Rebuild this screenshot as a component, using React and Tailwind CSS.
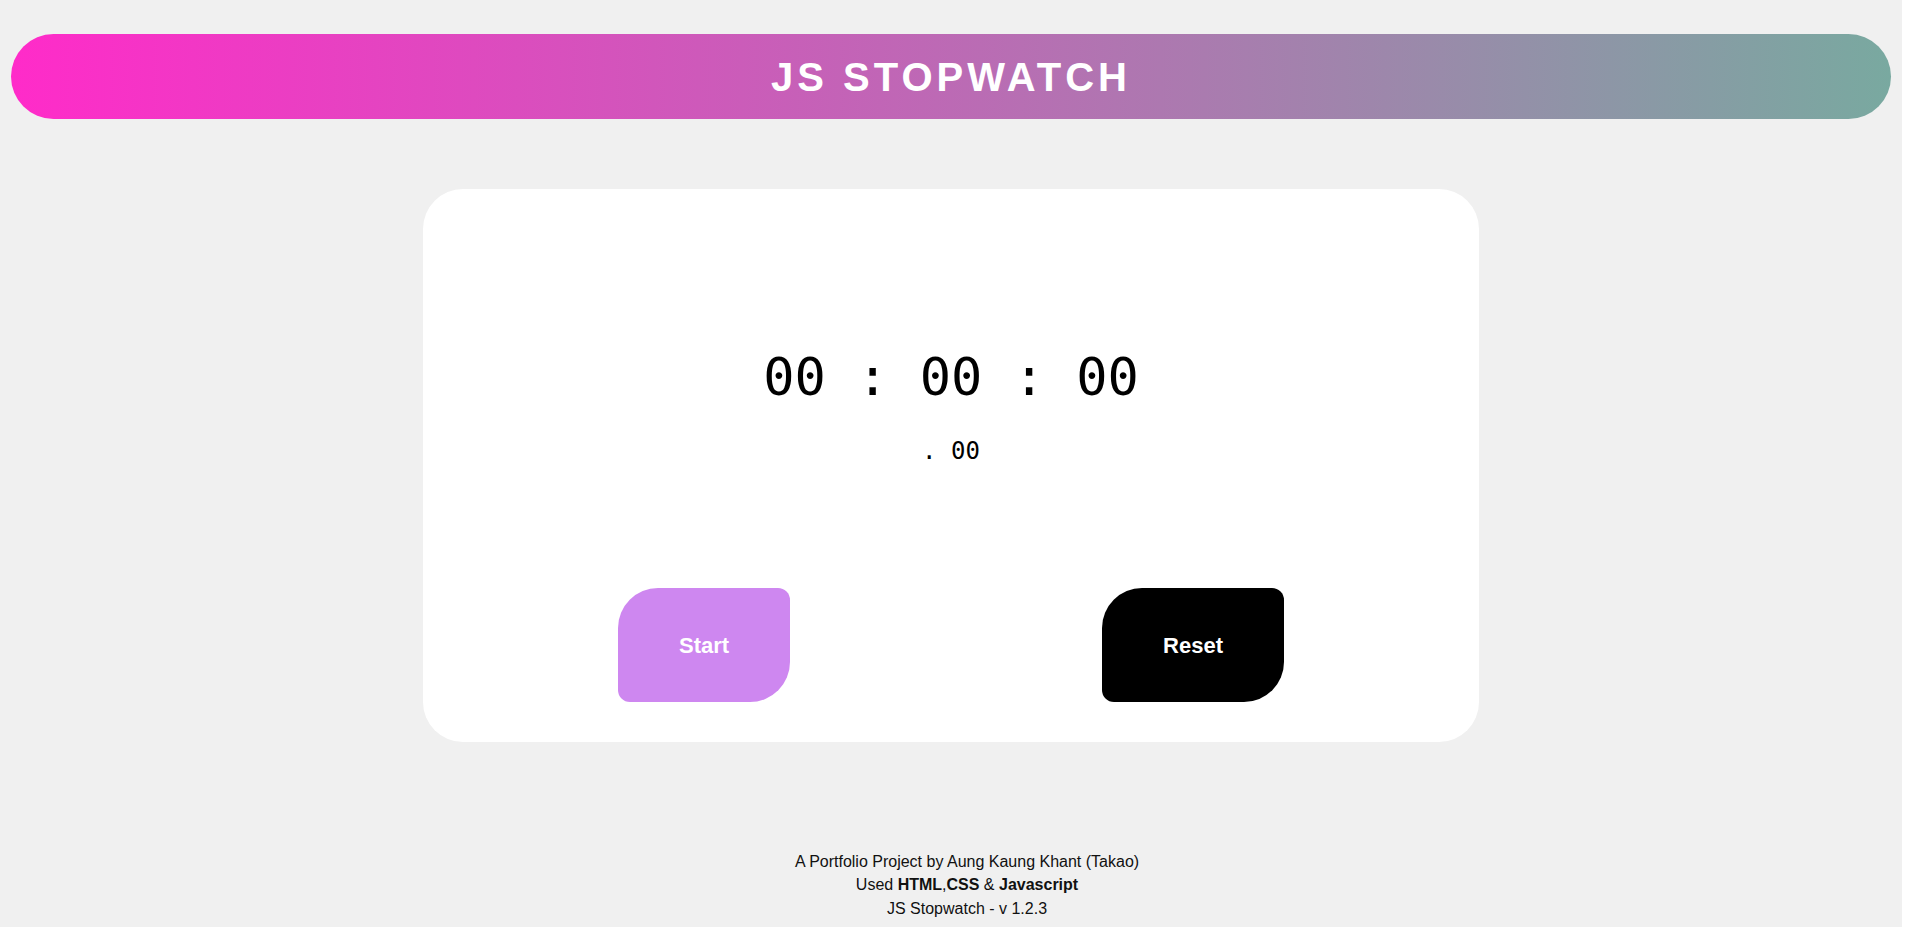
const App = () => {
  return (
    <div className="bg-[#f0f0f0] min-h-screen w-[1902px] font-['Liberation_Sans',Arial,sans-serif]">
      {/* Header */}
      <div className="pt-[34px] pl-[11px] pr-[11px]">
        <header className="h-[85px] rounded-full bg-[linear-gradient(to_right,#ff2bc9,#79a9a0)] flex items-center justify-center">
          <h1 className="text-white font-bold text-[40px] tracking-[4px]">JS STOPWATCH</h1>
        </header>
      </div>

      {/* Stopwatch card */}
      <div className="mt-[70px] mx-auto w-[1056px] h-[553px] bg-white rounded-[40px] pt-[158px] flex flex-col items-center">
        <div className="font-['DejaVu_Sans_Mono',monospace] slashed-zero text-black text-[52px] leading-[60px]">
          00 : 00 : 00
        </div>
        <div className="mt-[30px] font-['DejaVu_Sans_Mono',monospace] slashed-zero text-black text-[24px] leading-[28px]">
          . 00
        </div>
        <div className="mt-[123px] w-full px-[195px] flex justify-between">
          <button className="h-[114px] px-[61px] bg-[#ce87f0] text-white font-bold text-[22px] rounded-tl-[40px] rounded-br-[40px] rounded-tr-[12px] rounded-bl-[12px]">
            Start
          </button>
          <button className="h-[114px] px-[61px] bg-black text-white font-bold text-[22px] rounded-tl-[40px] rounded-br-[40px] rounded-tr-[12px] rounded-bl-[12px]">
            Reset
          </button>
        </div>
      </div>

      {/* Footer */}
      <footer className="mt-[108px] pl-[32px] text-center text-[16px] leading-[23.3px] text-[#111]">
        <p>A Portfolio Project by Aung Kaung Khant (Takao)</p>
        <p>
          Used <b>HTML</b>,<b>CSS</b> &amp; <b>Javascript</b>
        </p>
        <p>JS Stopwatch - v 1.2.3</p>
      </footer>
    </div>
  );
};

export default App;
